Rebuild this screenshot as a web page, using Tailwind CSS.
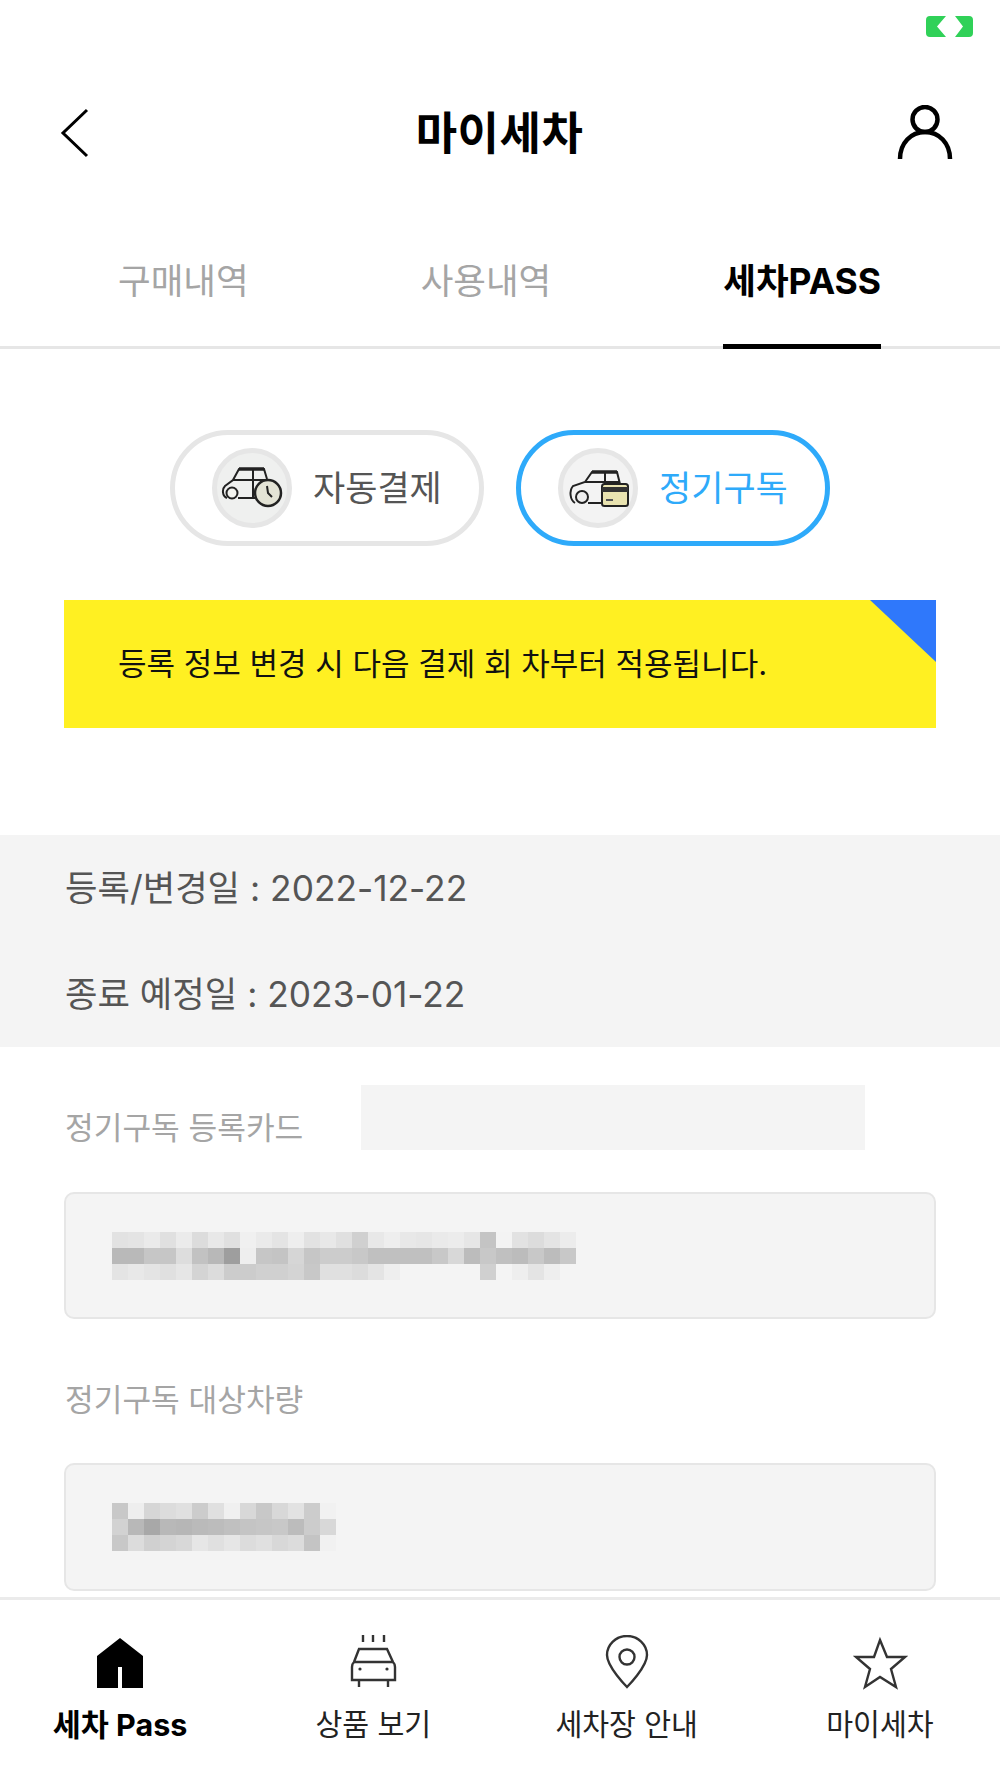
<!DOCTYPE html>
<html lang="ko">
<head>
<meta charset="utf-8">
<script src="https://cdn.jsdelivr.net/npm/@tailwindcss/browser@4"></script>
</head>
<body class="bg-white">
<div class="w-[1000px] h-[1778px] flex flex-col overflow-hidden bg-white font-['Inter','Noto_Sans_CJK_KR',sans-serif]">
  <div class="h-[64px] flex justify-end pt-[16px] pr-[27px] shrink-0">
    <svg class="w-[47px] h-[21px]" viewBox="0 0 47 21"><path d="M4 0H20L11 10.5L20 21H4Q0 21 0 17V4Q0 0 4 0Z" fill="#30d158"/><path d="M29 0H43Q47 0 47 4V17Q47 21 43 21H29L37 10.5Z" fill="#30d158"/></svg>
  </div>
  <header class="h-[138px] flex items-center justify-between pl-[60px] pr-[47px] shrink-0 relative">
    <svg class="w-[30px] h-[50px]" viewBox="0 0 30 50" fill="none" stroke="#000" stroke-width="3"><path d="M27 2L3 25L27 48" stroke-linejoin="miter"/></svg>
    <h1 class="ml-[12px] text-[45px] font-bold text-black leading-none tracking-[0.5px]">마이세차</h1>
    <svg class="w-[56px] h-[56px]" viewBox="0 0 56 56" fill="none" stroke="#000" stroke-width="4.5"><circle cx="28" cy="14.5" r="12.5"/><path d="M3 54C3 38 14 27 28 27C42 27 53 38 53 54"/></svg>
  </header>
  <nav class="h-[147px] border-b-[3px] border-[#e6e6e6] flex items-start gap-[172px] pl-[118px] shrink-0">
    <a class="h-[147px] pt-[17px] flex items-center border-b-[5px] border-transparent text-[35.5px] text-[#a5a5a5]">구매내역</a>
    <a class="h-[147px] pt-[17px] flex items-center border-b-[5px] border-transparent text-[35.5px] text-[#a5a5a5]">사용내역</a>
    <a class="h-[147px] pt-[17px] flex items-center border-b-[5px] border-black text-[35.5px] font-bold text-black">세차PASS</a>
  </nav>
  <div class="mt-[81px] flex justify-center gap-[32px] shrink-0">
    <button class="w-[314px] h-[116px] rounded-full border-[5px] border-[#e6e6e6] flex items-center pl-[37px] gap-[21px] bg-white">
      <span class="w-[80px] h-[80px] rounded-full border-[5px] border-[#e6e6e6] bg-[#eff0ef] shrink-0 block">
        <svg class="w-[70px] h-[70px]" viewBox="0 0 70 70" fill="none" stroke="#222" stroke-width="2"><path d="M10 45C5 43 5 36 8 33L16 27L22 16H47L50 26"/><path d="M22 16H47" stroke-width="3.5"/><path d="M16 27H50M36 16V45M21 45H38"/><circle cx="15" cy="40" r="5.5" fill="#f4f4f0"/><circle cx="51" cy="40" r="13" fill="#e3e3d5" stroke-width="2.5"/><path d="M50 33L51 40L55 44"/></svg>
      </span>
      <span class="text-[35px] text-[#555]">자동결제</span>
    </button>
    <button class="w-[314px] h-[116px] rounded-full border-[5px] border-[#2eaafa] flex items-center pl-[37px] gap-[21px] bg-white">
      <span class="w-[80px] h-[80px] rounded-full border-[5px] border-[#e6e6e6] bg-[#f3f3f3] shrink-0 block">
        <svg class="w-[70px] h-[70px]" viewBox="0 0 70 70" fill="none" stroke="#222" stroke-width="2"><path d="M12 50C7 47 6 38 10 33L22 29L29 19H54L57 31"/><path d="M29 19H54" stroke-width="3.5"/><path d="M22 29H56M42 19V31M25 50H40"/><circle cx="19" cy="44" r="6" fill="#eee"/><rect x="39" y="31" width="26" height="22" rx="2.5" fill="#e9e3b0" stroke-width="2"/><rect x="39" y="34" width="26" height="5" fill="#333" stroke="none"/><rect x="43" y="46" width="7" height="2" fill="#555" stroke="none"/></svg>
      </span>
      <span class="text-[35px] text-[#2eaafa]">정기구독</span>
    </button>
  </div>
  <div class="mt-[54px] mx-[64px] h-[128px] bg-[#fff022] flex items-center pl-[54px] relative shrink-0">
    <p class="text-[31px] text-[#111]">등록 정보 변경 시 다음 결제 회 차부터 적용됩니다.</p>
    <svg class="absolute top-0 right-0 w-[66px] h-[62px]" viewBox="0 0 66 62"><path d="M0 0H66V62Z" fill="#2f78fb"/></svg>
  </div>
  <div class="mt-[107px] bg-[#f4f4f4] pl-[65px] text-[#555] text-[35.3px] shrink-0">
    <div class="h-[106px] pt-[2px] flex items-center">등록/변경일 : 2022-12-22</div>
    <div class="h-[106px] pt-[2px] flex items-center">종료 예정일 : 2023-01-22</div>
  </div>
  <div class="mt-[38px] h-[65px] flex items-end pl-[65px] shrink-0">
    <span class="w-[296px] h-[44px] leading-[44px] text-[31.2px] text-[#a5a5a5]">정기구독 등록카드</span>
    <div class="w-[504px] h-[65px] bg-[#f4f4f4]"></div>
  </div>
  <div class="mt-[42px] mx-[64px] h-[127px] rounded-[10px] border-[2px] border-[#e6e6e6] bg-[#f4f4f4] flex items-center pl-[46px] shrink-0">
    <svg class="w-[464px] h-[48px] blur-[0.7px]" viewBox="0 0 464 48" shape-rendering="crispEdges">
      <g>
        <rect x="0" y="0" width="16" height="16" fill="#e2e2e2"/><rect x="16" y="0" width="16" height="16" fill="#e4e4e4"/><rect x="32" y="0" width="16" height="16" fill="#eaeaea"/><rect x="48" y="0" width="16" height="16" fill="#e0e0e0"/><rect x="64" y="0" width="16" height="16" fill="#ebebeb"/><rect x="80" y="0" width="16" height="16" fill="#dcdcdc"/><rect x="96" y="0" width="16" height="16" fill="#e8e8e8"/><rect x="112" y="0" width="16" height="16" fill="#e0e0e0"/><rect x="128" y="0" width="16" height="16" fill="#f0f0f0"/><rect x="144" y="0" width="16" height="16" fill="#eaeaea"/><rect x="160" y="0" width="16" height="16" fill="#e4e4e4"/><rect x="176" y="0" width="16" height="16" fill="#eeeeee"/><rect x="192" y="0" width="16" height="16" fill="#e2e2e2"/><rect x="208" y="0" width="16" height="16" fill="#e8e8e8"/><rect x="224" y="0" width="16" height="16" fill="#e0e0e0"/><rect x="240" y="0" width="16" height="16" fill="#d0d0d0"/><rect x="256" y="0" width="16" height="16" fill="#e8e8e8"/><rect x="272" y="0" width="16" height="16" fill="#eeeeee"/><rect x="288" y="0" width="16" height="16" fill="#e8e8e8"/><rect x="304" y="0" width="16" height="16" fill="#e6e6e6"/><rect x="320" y="0" width="16" height="16" fill="#eaeaea"/><rect x="336" y="0" width="16" height="16" fill="#ececec"/><rect x="352" y="0" width="16" height="16" fill="#e6e6e6"/><rect x="368" y="0" width="16" height="16" fill="#c4c4c4"/><rect x="384" y="0" width="16" height="16" fill="#f3f3f3"/><rect x="400" y="0" width="16" height="16" fill="#e2e2e2"/><rect x="416" y="0" width="16" height="16" fill="#dcdcdc"/><rect x="432" y="0" width="16" height="16" fill="#e4e4e4"/><rect x="448" y="0" width="16" height="16" fill="#ececec"/>
      </g>
      <g>
        <rect x="0" y="16" width="16" height="16" fill="#b9b9b9"/><rect x="16" y="16" width="16" height="16" fill="#b9b9b9"/><rect x="32" y="16" width="16" height="16" fill="#c6c6c6"/><rect x="48" y="16" width="16" height="16" fill="#c6c6c6"/><rect x="64" y="16" width="16" height="16" fill="#dddddd"/><rect x="80" y="16" width="16" height="16" fill="#c2c2c2"/><rect x="96" y="16" width="16" height="16" fill="#b8b8b8"/><rect x="112" y="16" width="16" height="16" fill="#9e9e9e"/><rect x="128" y="16" width="16" height="16" fill="#eeeeee"/><rect x="144" y="16" width="16" height="16" fill="#c6c6c6"/><rect x="160" y="16" width="16" height="16" fill="#c4c4c4"/><rect x="176" y="16" width="16" height="16" fill="#d6d6d6"/><rect x="192" y="16" width="16" height="16" fill="#c6c6c6"/><rect x="208" y="16" width="16" height="16" fill="#cccccc"/><rect x="224" y="16" width="16" height="16" fill="#cccccc"/><rect x="240" y="16" width="16" height="16" fill="#c8c8c8"/><rect x="256" y="16" width="16" height="16" fill="#c0c0c0"/><rect x="272" y="16" width="16" height="16" fill="#c0c0c0"/><rect x="288" y="16" width="16" height="16" fill="#c0c0c0"/><rect x="304" y="16" width="16" height="16" fill="#c0c0c0"/><rect x="320" y="16" width="16" height="16" fill="#c8c8c8"/><rect x="336" y="16" width="16" height="16" fill="#d8d8d8"/><rect x="352" y="16" width="16" height="16" fill="#bcbcbc"/><rect x="368" y="16" width="16" height="16" fill="#c8c8c8"/><rect x="384" y="16" width="16" height="16" fill="#c0c0c0"/><rect x="400" y="16" width="16" height="16" fill="#bcbcbc"/><rect x="416" y="16" width="16" height="16" fill="#c8c8c8"/><rect x="432" y="16" width="16" height="16" fill="#bcbcbc"/><rect x="448" y="16" width="16" height="16" fill="#c8c8c8"/>
      </g>
      <g>
        <rect x="0" y="32" width="16" height="16" fill="#e4e4e4"/><rect x="16" y="32" width="16" height="16" fill="#e8e8e8"/><rect x="32" y="32" width="16" height="16" fill="#e4e4e4"/><rect x="48" y="32" width="16" height="16" fill="#e0e0e0"/><rect x="64" y="32" width="16" height="16" fill="#e6e6e6"/><rect x="80" y="32" width="16" height="16" fill="#d4d4d4"/><rect x="96" y="32" width="16" height="16" fill="#dcdcdc"/><rect x="112" y="32" width="16" height="16" fill="#cccccc"/><rect x="128" y="32" width="16" height="16" fill="#cccccc"/><rect x="144" y="32" width="16" height="16" fill="#d0d0d0"/><rect x="160" y="32" width="16" height="16" fill="#d0d0d0"/><rect x="176" y="32" width="16" height="16" fill="#d4d4d4"/><rect x="192" y="32" width="16" height="16" fill="#c8c8c8"/><rect x="208" y="32" width="16" height="16" fill="#e0e0e0"/><rect x="224" y="32" width="16" height="16" fill="#e0e0e0"/><rect x="240" y="32" width="16" height="16" fill="#dcdcdc"/><rect x="256" y="32" width="16" height="16" fill="#e4e4e4"/><rect x="272" y="32" width="16" height="16" fill="#eeeeee"/><rect x="368" y="32" width="16" height="16" fill="#d0d0d0"/><rect x="400" y="32" width="16" height="16" fill="#eeeeee"/><rect x="416" y="32" width="16" height="16" fill="#e4e4e4"/><rect x="432" y="32" width="16" height="16" fill="#eeeeee"/>
      </g>
    </svg>
  </div>
  <div class="mt-[59px] pl-[65px] h-[44px] leading-[44px] text-[31.2px] text-[#a5a5a5] shrink-0">정기구독 대상차량</div>
  <div class="mt-[41px] mx-[64px] h-[128px] rounded-[10px] border-[2px] border-[#e6e6e6] bg-[#f4f4f4] flex items-center pl-[46px] shrink-0">
    <svg class="w-[240px] h-[48px] blur-[0.7px]" viewBox="0 0 240 48" shape-rendering="crispEdges">
      <g>
        <rect x="0" y="0" width="16" height="16" fill="#c8c8c8"/><rect x="16" y="0" width="16" height="16" fill="#eeeeee"/><rect x="32" y="0" width="16" height="16" fill="#d6d6d6"/><rect x="48" y="0" width="16" height="16" fill="#dcdcdc"/><rect x="64" y="0" width="16" height="16" fill="#e0e0e0"/><rect x="80" y="0" width="16" height="16" fill="#cccccc"/><rect x="96" y="0" width="16" height="16" fill="#e0e0e0"/><rect x="112" y="0" width="16" height="16" fill="#f0f0f0"/><rect x="128" y="0" width="16" height="16" fill="#d8d8d8"/><rect x="144" y="0" width="16" height="16" fill="#c8c8c8"/><rect x="160" y="0" width="16" height="16" fill="#d8d8d8"/><rect x="176" y="0" width="16" height="16" fill="#e2e2e2"/><rect x="192" y="0" width="16" height="16" fill="#cccccc"/><rect x="208" y="0" width="16" height="16" fill="#f1f1f1"/>
      </g>
      <g>
        <rect x="0" y="16" width="16" height="16" fill="#d2d2d2"/><rect x="16" y="16" width="16" height="16" fill="#b8b8b8"/><rect x="32" y="16" width="16" height="16" fill="#a8a8a8"/><rect x="48" y="16" width="16" height="16" fill="#b8b8b8"/><rect x="64" y="16" width="16" height="16" fill="#b6b6b6"/><rect x="80" y="16" width="16" height="16" fill="#bababa"/><rect x="96" y="16" width="16" height="16" fill="#bcbcbc"/><rect x="112" y="16" width="16" height="16" fill="#c0c0c0"/><rect x="128" y="16" width="16" height="16" fill="#c4c4c4"/><rect x="144" y="16" width="16" height="16" fill="#c6c6c6"/><rect x="160" y="16" width="16" height="16" fill="#c8c8c8"/><rect x="176" y="16" width="16" height="16" fill="#bcbcbc"/><rect x="192" y="16" width="16" height="16" fill="#cccccc"/><rect x="208" y="16" width="16" height="16" fill="#d8d8d8"/>
      </g>
      <g>
        <rect x="0" y="32" width="16" height="16" fill="#c8c8c8"/><rect x="16" y="32" width="16" height="16" fill="#dcdcdc"/><rect x="32" y="32" width="16" height="16" fill="#d0d0d0"/><rect x="48" y="32" width="16" height="16" fill="#d4d4d4"/><rect x="64" y="32" width="16" height="16" fill="#d8d8d8"/><rect x="80" y="32" width="16" height="16" fill="#e6e6e6"/><rect x="96" y="32" width="16" height="16" fill="#e0e0e0"/><rect x="112" y="32" width="16" height="16" fill="#e6e6e6"/><rect x="128" y="32" width="16" height="16" fill="#dcdcdc"/><rect x="144" y="32" width="16" height="16" fill="#e0e0e0"/><rect x="160" y="32" width="16" height="16" fill="#d8d8d8"/><rect x="176" y="32" width="16" height="16" fill="#dcdcdc"/><rect x="192" y="32" width="16" height="16" fill="#c4c4c4"/><rect x="208" y="32" width="16" height="16" fill="#f1f1f1"/>
      </g>
    </svg>
  </div>
  <footer class="mt-auto h-[181px] border-t-[3px] border-[#ebebeb] flex justify-between px-[20px] pt-[35px] shrink-0">
    <div class="w-[200px] flex flex-col items-center">
      <svg class="w-[56px] h-[56px]" viewBox="0 0 56 56"><path d="M28 3L51 21V53H30V32H26V53H5V21Z" fill="#000"/></svg>
      <span class="mt-[14px] leading-[40px] text-[30.5px] font-bold text-black">세차 Pass</span>
    </div>
    <div class="w-[200px] flex flex-col items-center">
      <svg class="w-[56px] h-[56px]" viewBox="0 0 56 56" fill="none" stroke="#333" stroke-width="2.4"><path d="M18 0V7M28 0V7M39 0V7"/><path d="M14 14H42L48 27Q50 29 50 32V45H7V32Q7 29 9 27Z"/><path d="M9 27H48M14 45V52M43 45V52"/><circle cx="15" cy="34" r="1.6" fill="#333" stroke="none"/><circle cx="42" cy="34" r="1.6" fill="#333" stroke="none"/></svg>
      <span class="mt-[14px] leading-[40px] text-[29.2px] text-[#222]">상품 보기</span>
    </div>
    <div class="w-[200px] flex flex-col items-center">
      <svg class="w-[56px] h-[56px]" viewBox="0 0 56 56" fill="none" stroke="#333" stroke-width="2.4"><path d="M28 52C28 52 8 32 8 20A20 19 0 0 1 48 20C48 32 28 52 28 52Z"/><circle cx="28" cy="22" r="7.5"/></svg>
      <span class="mt-[14px] leading-[40px] text-[29.2px] text-[#222]">세차장 안내</span>
    </div>
    <div class="w-[200px] flex flex-col items-center">
      <svg class="w-[56px] h-[56px]" viewBox="0 0 56 56" fill="none" stroke="#333" stroke-width="2.4"><path d="M28 5L35 22H53L39 34L44 52L28 42L13 52L18 34L4 22H22Z" stroke-linejoin="miter"/></svg>
      <span class="mt-[14px] leading-[40px] text-[29.2px] text-[#222]">마이세차</span>
    </div>
  </footer>
</div>
</body>
</html>
